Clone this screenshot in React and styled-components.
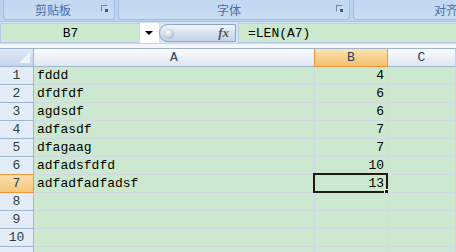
import React from 'react';
import styled, { createGlobalStyle } from 'styled-components';

const GlobalStyle = createGlobalStyle`
  html, body {
    margin: 0;
    padding: 0;
    width: 456px;
    height: 252px;
    overflow: hidden;
    background: #ffffff;
  }
`;

const Page = styled.div`
  width: 456px;
  height: 252px;
  overflow: hidden;
  font-family: 'Liberation Mono', 'DejaVu Sans Mono', monospace;
`;

const Ribbon = styled.div`
  height: 22px;
  display: flex;
  gap: 3px;
  padding: 0 0 0 3px;
  background: #bcd3ee;
  border-bottom: 1px solid #a9c3e4;
  box-sizing: border-box;
  overflow: hidden;
`;

const Group = styled.div`
  position: relative;
  flex: 0 0 ${(p) => p.$w}px;
  height: 20px;
  box-sizing: border-box;
  border: 1px solid #a3bde3;
  border-top: none;
  border-radius: 0 0 4px 4px;
  background: linear-gradient(#c3d8f1, #c8dcf3);
  display: flex;
  align-items: center;
  justify-content: ${(p) => (p.$start ? 'flex-start' : 'center')};
  padding-left: ${(p) => p.$start || 0}px;
  font-family: 'Noto Sans CJK SC', 'Noto Sans', sans-serif;
  font-size: 12px;
  color: #4a6fa8;
  white-space: nowrap;
`;

const GroupLabel = styled.span`
  transform: translateX(${(p) => p.$dx || 0}px);
  line-height: 14px;
`;

const Launcher = styled.span`
  position: absolute;
  right: ${(p) => p.$r}px;
  top: 5px;
  width: 7px;
  height: 7px;
  border: 1px solid #6b87b2;
  border-right-color: #d8e4f4;
  border-bottom-color: #d8e4f4;
  box-sizing: border-box;
  &::after {
    content: '';
    position: absolute;
    right: -1px;
    bottom: -1px;
    width: 3px;
    height: 3px;
    background: #3d5c8c;
  }
`;

const FormulaBar = styled.div`
  height: 22px;
  display: flex;
  align-items: stretch;
  background: #d5e3f4;
  padding: 1px 0 0 0;
  box-sizing: border-box;
  border-bottom: 1px solid #c6d6ea;
`;

const NameBox = styled.div`
  flex: 0 0 140px;
  background: #cce8cf;
  display: flex;
  align-items: center;
  justify-content: center;
  font-size: 13px;
  color: #000;
  border: 1px solid #b9cde6;
  border-right: none;
  box-sizing: border-box;
`;

const DropArrow = styled.div`
  flex: 0 0 19px;
  background: #ffffff;
  display: flex;
  align-items: center;
  justify-content: center;
  &::before {
    content: '';
    border-left: 4px solid transparent;
    border-right: 4px solid transparent;
    border-top: 4px solid #000;
    margin-left: -2px;
  }
`;

const Capsule = styled.div`
  flex: 0 0 77px;
  position: relative;
  margin: 1px 0;
  border: 1px solid #8aa6cf;
  border-radius: 10px 0 0 10px;
  background: linear-gradient(#f3f6fb, #d6e2f1 50%, #c4d4ea);
  display: flex;
  align-items: center;
  justify-content: flex-end;
  padding-right: 6px;
  box-sizing: border-box;
  font-family: 'Liberation Serif', serif;
  font-style: italic;
  font-weight: bold;
  font-size: 13px;
  color: #4b5b72;
  &::before {
    content: '';
    position: absolute;
    left: 4px;
    top: 4px;
    width: 10px;
    height: 10px;
    border-radius: 50%;
    background: radial-gradient(circle at 40% 35%, #ffffff, #b6bfcc 70%);
  }
`;

const FormulaInput = styled.div`
  flex: 1;
  margin-left: 2px;
  background: #cce8cf;
  border: 1px solid #b9cde6;
  border-right: none;
  display: flex;
  align-items: center;
  padding-left: 9px;
  font-size: 13px;
  color: #000;
  box-sizing: border-box;
`;

const Gap = styled.div`
  height: 4px;
  background: #f3f6fb;
  border-bottom: 1px solid #9fb3cc;
`;

const Sheet = styled.div`
  display: grid;
  grid-template-columns: 34px 281px 73px 1fr;
  grid-auto-rows: 18px;
`;

const Corner = styled.div`
  position: relative;
  background: linear-gradient(#dfe8f5, #c4d5ec);
  border-right: 1px solid #9eb6ce;
  border-bottom: 1px solid #9eb6ce;
  box-sizing: border-box;
  &::after {
    content: '';
    position: absolute;
    right: 3px;
    bottom: 3px;
    border-left: 11px solid transparent;
    border-bottom: 11px solid #eef3fa;
  }
`;

const ColHead = styled.div`
  display: flex;
  align-items: center;
  justify-content: center;
  font-size: 13px;
  color: #27415e;
  box-sizing: border-box;
  background: ${(p) =>
    p.$active
      ? 'linear-gradient(#fbe2b5, #f6cd85 60%, #f4c272)'
      : 'linear-gradient(#fbfcfe, #e9eef6 60%, #dfe6f0)'};
  border-right: 1px solid ${(p) => (p.$active ? '#f29536' : '#c5d2e3')};
  border-left: ${(p) => (p.$active ? '1px solid #f29536' : 'none')};
  border-bottom: 1px solid ${(p) => (p.$active ? '#f29536' : '#9eb6ce')};
  margin-left: ${(p) => (p.$active ? '-1px' : '0')};
`;

const RowHead = styled.div`
  display: flex;
  align-items: center;
  justify-content: center;
  font-size: 13px;
  color: #27413e;
  box-sizing: border-box;
  background: ${(p) =>
    p.$active ? 'linear-gradient(#fbdfae, #f5c77a)' : '#e4ecf7'};
  border-right: 1px solid ${(p) => (p.$active ? '#f29536' : '#9eb6ce')};
  border-bottom: 1px solid ${(p) => (p.$active ? '#f29536' : '#9eb6ce')};
  border-top: ${(p) => (p.$active ? '1px solid #f29536' : 'none')};
  margin-top: ${(p) => (p.$active ? '-1px' : '0')};
  height: ${(p) => (p.$active ? '19px' : '18px')};
`;

const Cell = styled.div`
  position: relative;
  background: #cce8cf;
  border-right: 1px solid #d0d7e5;
  border-bottom: 1px solid #d0d7e5;
  box-sizing: border-box;
  display: flex;
  align-items: center;
  justify-content: ${(p) => (p.$num ? 'flex-end' : 'flex-start')};
  padding: 0 3px;
  font-size: 13px;
  color: #000;
  white-space: nowrap;
`;

const Selection = styled.div`
  position: absolute;
  left: -2px;
  top: -2px;
  right: -1px;
  bottom: -1px;
  border: 2px solid #231815;
  pointer-events: none;
  &::after {
    content: '';
    position: absolute;
    right: -4px;
    bottom: -4px;
    width: 5px;
    height: 5px;
    background: #231815;
    border-left: 1px solid #fff;
    border-top: 1px solid #fff;
  }
`;

// the 11th row only peeks in at the bottom edge, its number is out of view
const rows = [
  ['fddd', 4],
  ['dfdfdf', 6],
  ['agdsdf', 6],
  ['adfasdf', 7],
  ['dfagaag', 7],
  ['adfadsfdfd', 10],
  ['adfadfadfadsf', 13],
  ['', ''],
  ['', ''],
  ['', ''],
  ['', ''],
];

export default function App() {
  return (
    <Page>
      <GlobalStyle />
      <Ribbon>
        <Group $w={112}>
          <GroupLabel $dx={-6}>剪贴板</GroupLabel>
          <Launcher $r={6} />
        </Group>
        <Group $w={232}>
          <GroupLabel $dx={-5}>字体</GroupLabel>
          <Launcher $r={6} />
        </Group>
        <Group $w={200} $start={80}>
          <GroupLabel>对齐方式</GroupLabel>
        </Group>
      </Ribbon>
      <FormulaBar>
        <NameBox>B7</NameBox>
        <DropArrow />
        <Capsule>fx</Capsule>
        <FormulaInput>=LEN(A7)</FormulaInput>
      </FormulaBar>
      <Gap />
      <Sheet>
        <Corner />
        <ColHead>A</ColHead>
        <ColHead $active>B</ColHead>
        <ColHead>C</ColHead>
        {rows.map(([text, num], i) => {
          const active = i === 6;
          return (
            <React.Fragment key={i}>
              <RowHead $active={active}>{i < 10 ? i + 1 : ''}</RowHead>
              <Cell>{text}</Cell>
              <Cell $num>
                {num}
                {active && <Selection />}
              </Cell>
              <Cell />
            </React.Fragment>
          );
        })}
      </Sheet>
    </Page>
  );
}
